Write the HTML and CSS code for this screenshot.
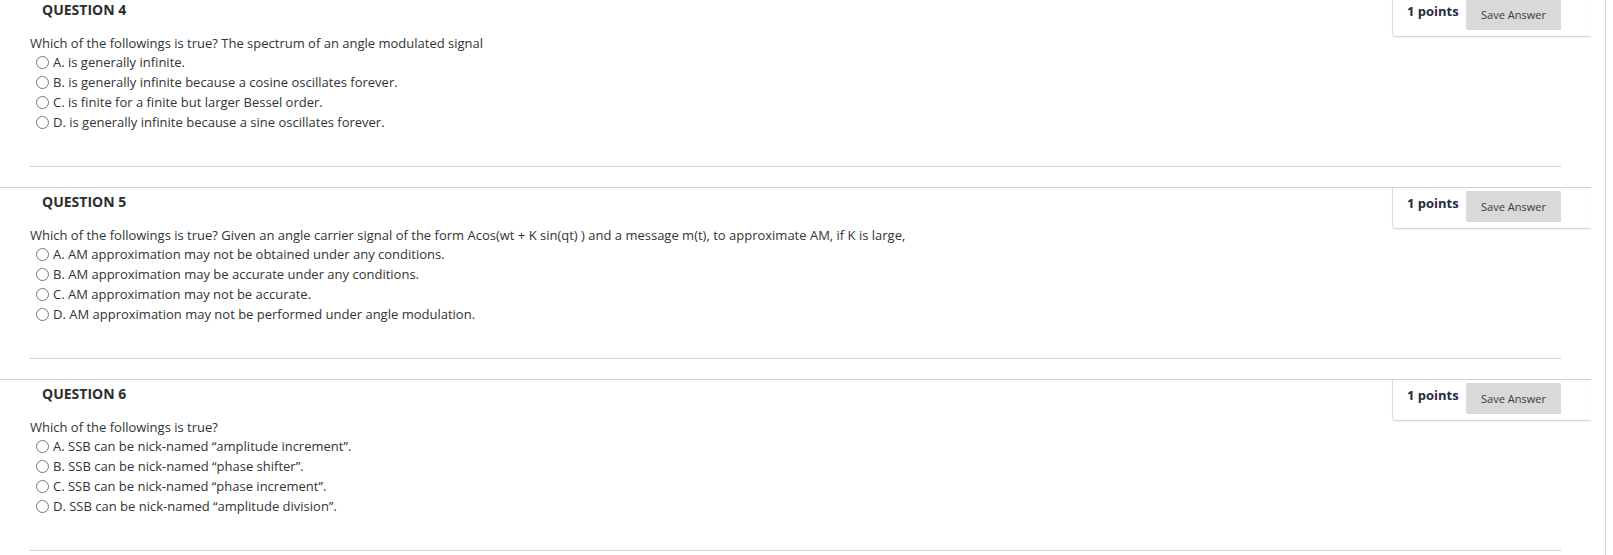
FILE: index.html
```html
<!DOCTYPE html>
<html lang="en">
<head>
<meta charset="utf-8">
<title>Questions</title>
<link rel="stylesheet" href="styles.css">
</head>
<body>
<div class="page">
  <div class="questions">
    <section class="question">
      <div class="q-head">
        <h3 class="q-title">QUESTION 4</h3>
        <div class="points-box">
          <span class="points">1 points</span>
          <button class="save-btn" type="button">Save Answer</button>
        </div>
      </div>
      <div class="q-body">
        <p class="q-text">Which of the followings is true? The spectrum of an angle modulated signal</p>
        <ul class="options">
          <li class="option"><span class="radio"></span><span>A. is generally infinite.</span></li>
          <li class="option"><span class="radio"></span><span>B. is generally infinite because a cosine oscillates forever.</span></li>
          <li class="option"><span class="radio"></span><span>C. is finite for a finite but larger Bessel order.</span></li>
          <li class="option"><span class="radio"></span><span>D. is generally infinite because a sine oscillates forever.</span></li>
        </ul>
      </div>
      <hr class="q-sep">
    </section>

    <section class="question">
      <div class="q-head">
        <h3 class="q-title">QUESTION 5</h3>
        <div class="points-box">
          <span class="points">1 points</span>
          <button class="save-btn" type="button">Save Answer</button>
        </div>
      </div>
      <div class="q-body">
        <p class="q-text">Which of the followings is true? Given an angle carrier signal of the form Acos(wt + K sin(qt) ) and a message m(t), to approximate AM, if K is large,</p>
        <ul class="options">
          <li class="option"><span class="radio"></span><span>A. AM approximation may not be obtained under any conditions.</span></li>
          <li class="option"><span class="radio"></span><span>B. AM approximation may be accurate under any conditions.</span></li>
          <li class="option"><span class="radio"></span><span>C. AM approximation may not be accurate.</span></li>
          <li class="option"><span class="radio"></span><span>D. AM approximation may not be performed under angle modulation.</span></li>
        </ul>
      </div>
      <hr class="q-sep">
    </section>

    <section class="question">
      <div class="q-head">
        <h3 class="q-title">QUESTION 6</h3>
        <div class="points-box">
          <span class="points">1 points</span>
          <button class="save-btn" type="button">Save Answer</button>
        </div>
      </div>
      <div class="q-body">
        <p class="q-text">Which of the followings is true?</p>
        <ul class="options">
          <li class="option"><span class="radio"></span><span>A. SSB can be nick-named “amplitude increment”.</span></li>
          <li class="option"><span class="radio"></span><span>B. SSB can be nick-named “phase shifter”.</span></li>
          <li class="option"><span class="radio"></span><span>C. SSB can be nick-named “phase increment”.</span></li>
          <li class="option"><span class="radio"></span><span>D. SSB can be nick-named “amplitude division”.</span></li>
        </ul>
      </div>
      <hr class="q-sep">
    </section>
  </div>
</div>
</body>
</html>
```
FILE: styles.css
```css
* { box-sizing: border-box; }

html, body {
  margin: 0;
  padding: 0;
  background: #ffffff;
  overflow: hidden;
}

body {
  font-family: "Open Sans", "Liberation Sans", sans-serif;
  color: #333333;
}

.page {
  width: 1606px;
  height: 555px;
  border-right: 1px solid #d4d4d4;
  padding-right: 14px;
  overflow: hidden;
}

.questions {
  margin-top: -5px;
  display: flex;
  flex-direction: column;
}

.question {
  height: 192px;
}

.q-head {
  display: flex;
  justify-content: space-between;
  align-items: flex-start;
  border-top: 1px solid #d0d0d0;
  height: 41px;
}

.q-title {
  margin: 0;
  padding: 4px 0 0 42px;
  font-size: 14px;
  line-height: 20px;
  font-weight: 700;
  color: #2d2d2d;
}

.points-box {
  width: 199px;
  height: 41px;
  display: flex;
  align-items: flex-start;
  padding: 3px 30px 0 14px;
  border-left: 1px solid #dcdcdc;
  border-bottom: 1px solid #d6d6d6;
  border-bottom-left-radius: 4px;
  box-shadow: 0 1px 2px rgba(0, 0, 0, 0.06);
  background: #ffffff;
}

.points {
  font-size: 13px;
  font-weight: 700;
  line-height: 22px;
  color: #232c3c;
  padding-top: 1px;
  flex: 1;
}

.save-btn {
  width: 95px;
  height: 31px;
  border: none;
  border-radius: 1px;
  background: #d9d9d9;
  font-family: "Open Sans", "Liberation Sans", sans-serif;
  font-size: 11px;
  color: #3a3a3a;
  padding: 0;
  cursor: pointer;
}

.q-body {
  padding-left: 30px;
  margin-top: 0;
}

.q-text {
  margin: 0 0 2px;
  font-size: 13px;
  line-height: 14px;
}

.options {
  list-style: none;
  margin: 0;
  padding: 0 0 0 6px;
}

.option {
  display: flex;
  align-items: center;
  font-size: 13px;
  line-height: 20px;
  height: 20px;
}

.radio {
  width: 13px;
  height: 13px;
  border: 1px solid #777777;
  border-radius: 50%;
  background: #ffffff;
  margin-right: 4px;
  flex: none;
}

.q-sep {
  margin: 34px 30px 0;
  border: none;
  border-top: 1px solid #d0d0d0;
  height: 0;
}
```
